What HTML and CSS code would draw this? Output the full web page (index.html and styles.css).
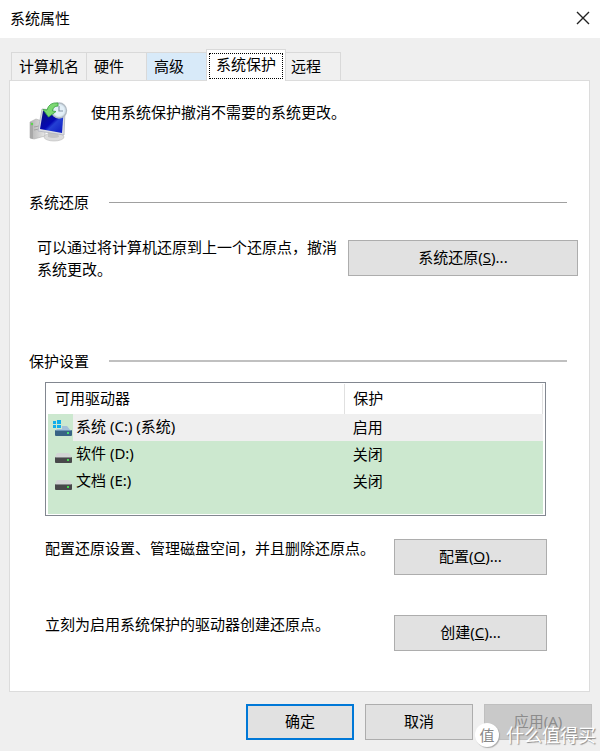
FILE: index.html
```html
<!DOCTYPE html>
<html lang="zh-CN">
<head>
	<meta charset="utf-8">
	<title>系统属性</title>
	<link rel="stylesheet" href="styles.css">
</head>
<body>
<div class="dialog">
	<header class="titlebar">
		<h1>系统属性</h1>
		<button class="close" type="button" aria-label="关闭">
			<svg width="14" height="14" viewBox="0 0 14 14"><path d="M1 1L13 13M13 1L1 13" stroke="#222" stroke-width="1.4" fill="none"/></svg>
		</button>
	</header>

	<div class="tabs" role="tablist">
		<button class="tab wide" role="tab" type="button">计算机名</button>
		<button class="tab" role="tab" type="button">硬件</button>
		<button class="tab hover" role="tab" type="button">高级</button>
		<button class="tab active" role="tab" type="button" aria-selected="true"><span>系统保护</span></button>
		<button class="tab" role="tab" type="button">远程</button>
	</div>

	<main class="panel">
		<div class="intro">
			<svg width="40" height="40" viewBox="0 0 40 40">
				<defs>
					<linearGradient id="screen" x1="0" y1="0" x2="1" y2="1">
						<stop offset="0" stop-color="#0a1478"/>
						<stop offset=".5" stop-color="#0508b4"/>
						<stop offset=".6" stop-color="#2440d4"/>
						<stop offset="1" stop-color="#0c18c0"/>
					</linearGradient>
					<linearGradient id="tower" x1="0" y1="0" x2="1" y2="0">
						<stop offset="0" stop-color="#b4b4b4"/>
						<stop offset="1" stop-color="#e6e6e6"/>
					</linearGradient>
				</defs>
				<path d="M1 20L7 17L16 20V34L5 37L1 36Z" fill="url(#tower)" stroke="#b0b0b0" stroke-width=".6"/>
				<path d="M1 20L4 21V37L1 36Z" fill="#a8a8a8"/>
				<path d="M5 25L10 24M5 28L10 27" stroke="#999" stroke-width=".8"/>
				<circle cx="3" cy="22" r="1.2" fill="#5bd84c"/>
				<ellipse cx="25" cy="35" rx="10" ry="4" fill="#dcdcdc" stroke="#b8b8b8" stroke-width=".6"/>
				<path d="M19 30L29 31L30 35Q25 37 19 35Z" fill="#c4c4c4"/>
				<path d="M13 7L36 9L35 33L9 29Z" fill="#dcdee2" stroke="#b0b3bc" stroke-width=".8"/>
				<path d="M14 9L34.500 11L33 31L11 27Z" fill="url(#screen)"/>
				<circle cx="30" cy="8.500" r="7.500" fill="#d4e2ec" stroke="#b3bcc4" stroke-width="1.400"/>
				<circle cx="30" cy="8.500" r="5.500" fill="#e4f0f8"/>
				<path d="M30 4V9H34" fill="none" stroke="#8494a6" stroke-width="1.200"/>
				<path d="M29 1Q20 0 18 8L14 7.500L19.500 15L27 9.500L23.500 9Q24 4 29 4Z" fill="#7cd872" stroke="#3fa646" stroke-width=".9"/>
			</svg>
			<p>使用系统保护撤消不需要的系统更改。</p>
		</div>

		<section class="restore">
			<h2>系统还原</h2>
			<div class="row">
				<p>可以通过将计算机还原到上一个还原点，撤消系统更改。</p>
				<button class="btn large" type="button">系统还原(<u>S</u>)...</button>
			</div>
		</section>

		<section class="settings">
			<h2>保护设置</h2>
			<div class="list">
				<table>
					<thead>
						<tr><th class="drive" scope="col">可用驱动器</th><th scope="col">保护</th></tr>
					</thead>
					<tbody>
						<tr class="selected">
							<td class="drive">
								<span class="icon"><svg width="19" height="18" viewBox="0 0 19 18">
									<path d="M0 1H3V4H0ZM4 0H8V4H4ZM0 5H3V8H0ZM4 5H8V8H4Z" fill="#12aeea"/>
									<path d="M9 6H14L18 11H2L4 9H9Z" fill="#a3bfd8"/>
									<rect x="2" y="10" width="17" height="6" rx="1" fill="#386385"/>
									<path d="M2.500 10.500H18" stroke="#6b94b5"/>
									<rect x="14" y="12" width="2" height="2" fill="#45df70"/>
								</svg></span><span class="name">系统 (C:) (系统)</span>
							</td>
							<td>启用</td>
						</tr>
						<tr>
							<td class="drive">
								<span class="icon"><svg width="19" height="18" viewBox="0 0 19 18">
									<path d="M5 6H15Q17 6 19 11H2Q3 6 5 6Z" fill="#d3d5d5"/>
									<rect x="2" y="10" width="17" height="6" rx="1" fill="#48484a"/>
									<path d="M2.500 10.500H18" stroke="#85888a"/>
									<rect x="14" y="12" width="2" height="2" fill="#45d850"/>
								</svg></span><span class="name">软件 (D:)</span>
							</td>
							<td>关闭</td>
						</tr>
						<tr>
							<td class="drive">
								<span class="icon"><svg width="19" height="18" viewBox="0 0 19 18">
									<path d="M5 6H15Q17 6 19 11H2Q3 6 5 6Z" fill="#d3d5d5"/>
									<rect x="2" y="10" width="17" height="6" rx="1" fill="#48484a"/>
									<path d="M2.500 10.500H18" stroke="#85888a"/>
									<rect x="14" y="12" width="2" height="2" fill="#45d850"/>
								</svg></span><span class="name">文档 (E:)</span>
							</td>
							<td>关闭</td>
						</tr>
					</tbody>
				</table>
			</div>
			<div class="row action">
				<p>配置还原设置、管理磁盘空间，并且删除还原点。</p>
				<button class="btn" type="button">配置(<u>O</u>)...</button>
			</div>
			<div class="row action">
				<p>立刻为启用系统保护的驱动器创建还原点。</p>
				<button class="btn" type="button">创建(<u>C</u>)...</button>
			</div>
		</section>
	</main>

	<footer class="buttons">
		<button class="btn default" type="button">确定</button>
		<button class="btn" type="button">取消</button>
		<button class="btn" type="button" disabled>应用(A)</button>
	</footer>

	<div class="watermark"><span class="badge">值</span><span>什么值得买</span></div>
</div>
</body>
</html>
```
FILE: styles.css
```css
* {
	box-sizing: border-box;
}
body {
	margin: 0;
	background: #efefef;
	color: #000;
}
body, button {
	font: 15px/22px "Noto Sans", "Noto Sans CJK SC", sans-serif;
}
h1, h2, p {
	margin: 0;
	font-size: 15px;
	font-weight: normal;
}
button {
	color: #000;
	padding: 0 0 2px;
}
.dialog {
	position: relative;
	min-height: 100vh;
}

/* title bar and tabs */
.titlebar {
	display: flex;
	align-items: center;
	justify-content: space-between;
	height: 38px;
	padding: 0 10px 2px;
	background: #fff;
}
.close {
	display: flex;
	padding: 0;
	border: 0;
	background: none;
}
.tabs {
	display: flex;
	align-items: flex-end;
	height: 42px;
	padding-left: 11px;
}
.tab {
	width: 60px;
	height: 28px;
	padding-left: 7px;
	border: 1px solid #d9d9d9;
	border-right: 0;
	border-bottom: 0;
	background: #f0f0f0;
	text-align: left;
}
.tab.wide {
	width: 75px;
}
.tab.hover {
	background: #d8eaf9;
}
.tab.active {
	position: relative;
	width: 80px;
	height: 32px;
	margin-bottom: -1px;
	padding: 2px;
	border-right: 1px solid #d9d9d9;
	background: #fff;
}
.tab.active span {
	display: block;
	height: 26px;
	border: 1px dotted #000;
	line-height: 20px;
	text-align: center;
}
.tab:last-child {
	width: 55px;
	padding-left: 5px;
	border-left: 0;
	border-right: 1px solid #d9d9d9;
}

/* tab page */
.panel {
	margin: 0 10px 0 9px;
	padding: 20px 11px 40px 19px;
	border: 1px solid #dcdcdc;
	background: #fff;
}
.intro {
	display: flex;
	gap: 22px;
}
.intro svg {
	margin-top: 1px;
}
h2 {
	display: flex;
	align-items: center;
	gap: 20px;
	margin-right: 11px;
}
h2:after {
	content: "";
	flex: 1;
	border-top: 1px solid #a0a0a0;
}
.settings h2:after {
	border-top: 2px solid #c0c0c0;
}
.row {
	display: flex;
	justify-content: space-between;
	gap: 8px;
}
.restore {
	margin-top: 49px;
}
.restore .row {
	margin: 23px 0 70px;
	padding-left: 8px;
}
.restore .btn {
	margin-top: 4px;
}
.restore p {
	flex: 1;
}
.btn {
	flex: none;
	width: 153px;
	height: 36px;
	border: 1px solid #adadad;
	background: #e1e1e1;
}
.btn.large {
	width: 230px;
}
.action {
	margin: 21px 31px 0 16px;
}
.action .btn {
	margin-top: 2px;
}
.action + .action {
	margin-top: 38px;
}

/* drive list */
.list {
	height: 134px;
	margin: 10px 32px 0 16px;
	padding: 1px 2px;
	border: 1px solid #828790;
	background: #cce8cf;
	background-clip: content-box;
}
table {
	width: 100%;
	border-collapse: collapse;
	table-layout: fixed;
}
th, td {
	height: 27px;
	padding: 0 0 2px 8px;
	font-weight: normal;
	text-align: left;
}
th {
	height: 30px;
	background: #fff;
	border-right: 1px solid #e0e0e0;
}
th.drive {
	padding-left: 7px;
}
.drive {
	width: 60%;
}
td.drive {
	padding: 0;
}
.icon, .name {
	display: inline-block;
	vertical-align: top;
	height: 27px;
	line-height: 25px;
}
.icon {
	width: 25px;
	padding: 6px 0 0 5px;
	background: #cce8cf;
}
.icon svg {
	display: block;
}
.name {
	padding-left: 3px;
}
.selected {
	background: #efefef;
}

/* bottom buttons */
.buttons {
	display: flex;
	justify-content: flex-end;
	gap: 11px;
	padding: 12px 8px;
}
.buttons .btn {
	width: 108px;
}
.btn.default {
	border: 2px solid #0078d7;
}
.btn:disabled {
	border-color: #bfbfbf;
	background: #c9c9c9;
	color: #8c8c8c;
}
.watermark {
	position: absolute;
	right: 4px;
	bottom: 5px;
	display: flex;
	align-items: center;
	gap: 7px;
	color: #fff;
	font-size: 18px;
	line-height: 24px;
	text-shadow: 1px 1px 1px #888;
}
.badge {
	width: 24px;
	height: 24px;
	border-radius: 50%;
	background: #fff;
	box-shadow: 1px 1px 1px #aaa;
	color: #888;
	font-size: 15px;
	text-align: center;
	text-shadow: none;
}
```
